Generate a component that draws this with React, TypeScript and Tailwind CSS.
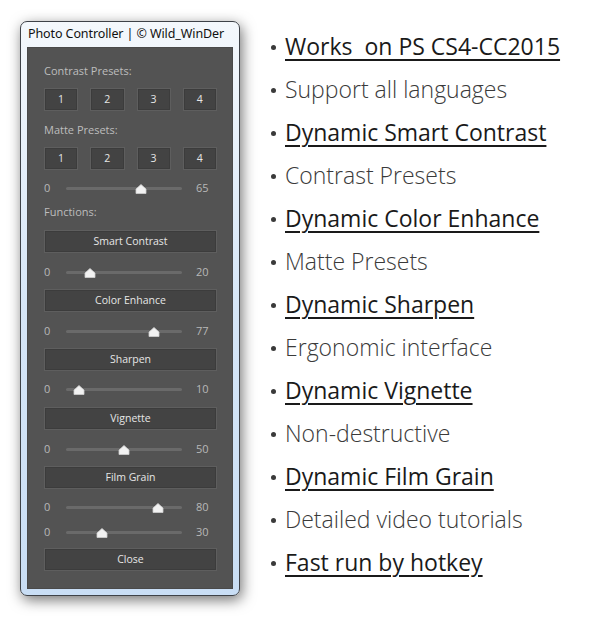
import React from "react";

const Label = ({ children, mt }: { children: React.ReactNode; mt: string }) => (
  <div className={`${mt} h-[14px] text-[11px] leading-[14px] text-[#bdbdbd]`}>{children}</div>
);

const Btn = ({ children, cls = "" }: { children: React.ReactNode; cls?: string }) => (
  <div
    className={`h-[23px] flex items-center justify-center border border-[#5e5e5e] bg-[#434343] text-[10.5px] text-[#e6e6e6] shadow-[inset_0_0_0_1px_#3c3c3c] ${cls}`}
  >
    {children}
  </div>
);

const Slider = ({ value, mt }: { value: number; mt: string }) => (
  <div className={`${mt} h-[14px] flex items-center text-[11px] text-[#b8b8b8]`}>
    <div className="w-[22px] leading-[14px]">0</div>
    <div className="relative w-[116px] h-[14px]">
      <div className="absolute left-0 right-0 top-[6px] h-[3px] rounded-full bg-[#6a6a6a]" />
      <svg
        className="absolute top-[3px]"
        style={{ left: `${(value / 100) * 112 - 4}px` }}
        width="12"
        height="10"
        viewBox="0 0 12 10"
      >
        <path d="M6 0.5 L11 5 L11 9.5 L1 9.5 L1 5 Z" fill="#f2f2f2" stroke="#cfcfcf" strokeWidth="0.8" />
      </svg>
    </div>
    <div className="ml-[14px] leading-[14px]">{value}</div>
  </div>
);

const items: [string, boolean][] = [
  ["Works\u00a0 on PS CS4-CC2015", true],
  ["Support all languages", false],
  ["Dynamic Smart Contrast", true],
  ["Contrast Presets", false],
  ["Dynamic Color Enhance", true],
  ["Matte Presets", false],
  ["Dynamic Sharpen", true],
  ["Ergonomic interface", false],
  ["Dynamic Vignette", true],
  ["Non-destructive", false],
  ["Dynamic Film Grain", true],
  ["Detailed video tutorials", false],
  ["Fast run by hotkey", true],
];

export default function App() {
  return (
    <div className="w-[590px] h-[623px] bg-white flex overflow-hidden">
      <div className="ml-[20px] mt-[21px] w-[220px] h-[575px] shrink-0 rounded-[7px] border border-[#3e4248] bg-gradient-to-b from-[#f4f8fc] via-[#d6e6f7] to-[#c9def5] shadow-[2px_4px_14px_rgba(0,0,0,0.55)] flex flex-col [font-family:'Open_Sans',sans-serif]">
        <div className="h-[25px] pl-[7px] flex items-center text-[12.5px] text-[#111] [font-family:'Noto_Sans',sans-serif] tracking-[-0.1px]">
          Photo Controller | © Wild_WinDer
        </div>
        <div className="mx-[6px] h-[542px] bg-[#535353] border border-[#4a4a4a] pl-[16px] pr-[15px] flex flex-col">
          <Label mt="mt-[16px]">Contrast Presets:</Label>
          <div className="mt-[10px] grid grid-cols-4 gap-[12px]">
            {[1, 2, 3, 4].map((n) => (
              <Btn key={n}>{n}</Btn>
            ))}
          </div>
          <Label mt="mt-[12px]">Matte Presets:</Label>
          <div className="mt-[10px] grid grid-cols-4 gap-[12px]">
            {[1, 2, 3, 4].map((n) => (
              <Btn key={n}>{n}</Btn>
            ))}
          </div>
          <Slider value={65} mt="mt-[11px]" />
          <Label mt="mt-[10px]">Functions:</Label>
          <Btn cls="mt-[11px]">Smart Contrast</Btn>
          <Slider value={20} mt="mt-[12px]" />
          <Btn cls="mt-[10px]">Color Enhance</Btn>
          <Slider value={77} mt="mt-[12px]" />
          <Btn cls="mt-[10px]">Sharpen</Btn>
          <Slider value={10} mt="mt-[11px]" />
          <Btn cls="mt-[11px]">Vignette</Btn>
          <Slider value={50} mt="mt-[12px]" />
          <Btn cls="mt-[10px]">Film Grain</Btn>
          <Slider value={80} mt="mt-[11px]" />
          <Slider value={30} mt="mt-[11px]" />
          <Btn cls="mt-[9px]">Close</Btn>
        </div>
      </div>
      <div className="ml-[31px] mt-[25px] flex flex-col [font-family:'Open_Sans',sans-serif] text-[23px]">
        {items.map(([t, u], i) => (
          <div key={i} className="h-[43px] leading-[43px] flex items-center whitespace-nowrap">
            <span className="w-[14px] flex">
              <span className="mt-[2px] w-[5px] h-[5px] rounded-full bg-[#3a3a3a]" />
            </span>
            <span
              className={
                u
                  ? "text-[#1a1a1a] underline decoration-[1.5px] underline-offset-[4px]"
                  : "text-[#3a3a3a] font-light"
              }
            >
              {t}
            </span>
          </div>
        ))}
      </div>
    </div>
  );
}
